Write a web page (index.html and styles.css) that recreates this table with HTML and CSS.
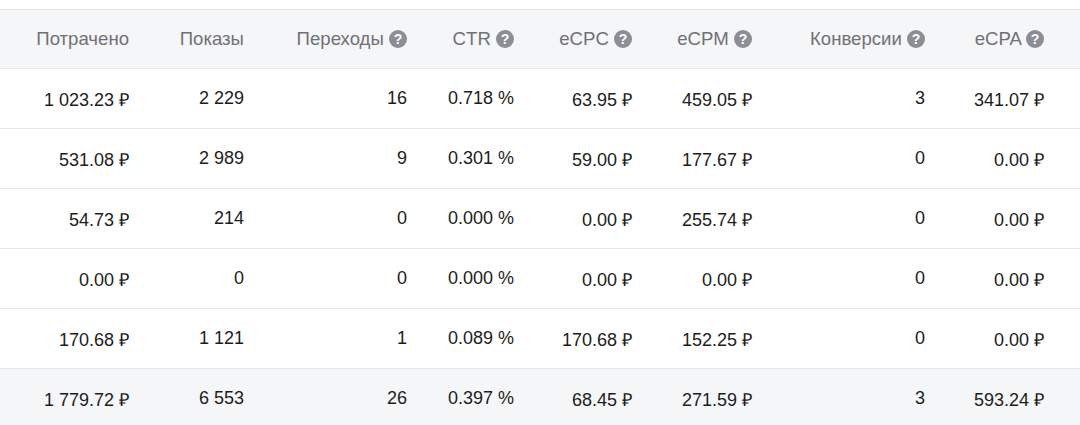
FILE: index.html
```html
<!DOCTYPE html>
<html lang="ru">
<head>
<meta charset="utf-8">
<link rel="stylesheet" href="styles.css">
</head>
<body>
<div class="stats">
  <div class="row head">
    <div class="cell">Потрачено</div>
    <div class="cell">Показы</div>
    <div class="cell">Переходы <span class="help">?</span></div>
    <div class="cell">CTR <span class="help">?</span></div>
    <div class="cell">eCPC <span class="help">?</span></div>
    <div class="cell">eCPM <span class="help">?</span></div>
    <div class="cell">Конверсии <span class="help">?</span></div>
    <div class="cell">eCPA <span class="help">?</span></div>
  </div>
  <div class="row">
    <div class="cell">1 023.23 ₽</div>
    <div class="cell">2 229</div>
    <div class="cell">16</div>
    <div class="cell">0.718 %</div>
    <div class="cell">63.95 ₽</div>
    <div class="cell">459.05 ₽</div>
    <div class="cell">3</div>
    <div class="cell">341.07 ₽</div>
  </div>
  <div class="row">
    <div class="cell">531.08 ₽</div>
    <div class="cell">2 989</div>
    <div class="cell">9</div>
    <div class="cell">0.301 %</div>
    <div class="cell">59.00 ₽</div>
    <div class="cell">177.67 ₽</div>
    <div class="cell">0</div>
    <div class="cell">0.00 ₽</div>
  </div>
  <div class="row">
    <div class="cell">54.73 ₽</div>
    <div class="cell">214</div>
    <div class="cell">0</div>
    <div class="cell">0.000 %</div>
    <div class="cell">0.00 ₽</div>
    <div class="cell">255.74 ₽</div>
    <div class="cell">0</div>
    <div class="cell">0.00 ₽</div>
  </div>
  <div class="row">
    <div class="cell">0.00 ₽</div>
    <div class="cell">0</div>
    <div class="cell">0</div>
    <div class="cell">0.000 %</div>
    <div class="cell">0.00 ₽</div>
    <div class="cell">0.00 ₽</div>
    <div class="cell">0</div>
    <div class="cell">0.00 ₽</div>
  </div>
  <div class="row">
    <div class="cell">170.68 ₽</div>
    <div class="cell">1 121</div>
    <div class="cell">1</div>
    <div class="cell">0.089 %</div>
    <div class="cell">170.68 ₽</div>
    <div class="cell">152.25 ₽</div>
    <div class="cell">0</div>
    <div class="cell">0.00 ₽</div>
  </div>
  <div class="row total">
    <div class="cell">1 779.72 ₽</div>
    <div class="cell">6 553</div>
    <div class="cell">26</div>
    <div class="cell">0.397 %</div>
    <div class="cell">68.45 ₽</div>
    <div class="cell">271.59 ₽</div>
    <div class="cell">3</div>
    <div class="cell">593.24 ₽</div>
  </div>
</div>
</body>
</html>
```

FILE: styles.css
```css
html, body {
  margin: 0;
  padding: 0;
  background: #ffffff;
}
body {
  font-family: "Liberation Sans", Arial, sans-serif;
  font-size: 18px;
  color: #1c1c1c;
  padding-top: 9px;
}
.stats {
  border-top: 1px solid #e6e7e9;
}
.row {
  display: grid;
  grid-template-columns: 147px 115px 163px 107px 118px 120px 173px 137px;
  height: 59px;
  align-items: center;
  border-bottom: 1px solid #e6e7e9;
}
.row.head {
  height: 58px;
  background: #f5f6f8;
  color: #707175;
  font-size: 18.6px;
}
.row.total {
  background: #f5f6f8;
  border-bottom: none;
}
.cell {
  text-align: right;
  padding-right: 18px;
  white-space: nowrap;
}
.cell:last-child {
  padding-right: 36px;
}
.help {
  display: inline-block;
  width: 18px;
  height: 18px;
  border-radius: 50%;
  background: #8b8e94;
  color: #ffffff;
  font-size: 14px;
  font-weight: bold;
  line-height: 18px;
  text-align: center;
  vertical-align: 1px;
}
```
